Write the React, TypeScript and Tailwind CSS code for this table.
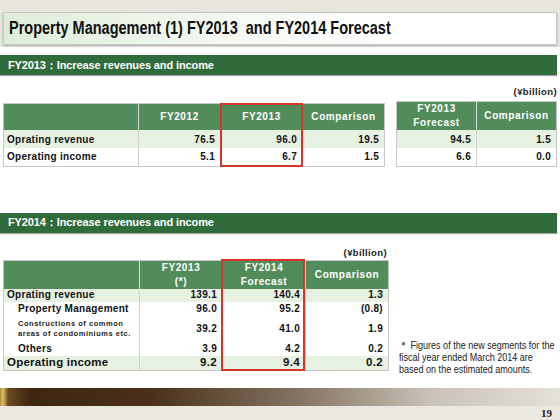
import React from 'react';

const sans = "font-['Liberation_Sans',Arial,sans-serif]";

const SectionBar = ({ label }: { label: string }) => (
  <div className="h-[20px] w-[557px] bg-[#2f6b3b] shadow-[0_1px_1px_rgba(0,0,0,0.35)] flex items-center pl-[8px]">
    <span className="text-white font-bold text-[11px] tracking-[-0.01em]">{label}</span>
  </div>
);

const Unit = () => (
  <div className="text-[9.5px] font-bold tracking-[0.04em] text-[#222] text-right leading-[10px]">(¥billion)</div>
);

const th = 'bg-[#538c5b] text-white font-bold text-[10px] tracking-[0.06em] text-center leading-[14px] border-l border-[#cfdccf] first:border-l-0';
const td = 'text-right pr-[5px] border-l border-[#cfcfcf] font-bold text-[10px] tracking-[0.03em] text-[#111]';
const lbl = 'font-bold text-[10px] tracking-[0.03em] text-[#111] whitespace-nowrap';

const App = () => {
  return (
    <div className={`${sans} w-[560px] h-[420px] bg-white flex flex-col overflow-hidden`}>
      {/* title */}
      <div className="bg-[#e9e6e0] pt-[12px] pb-[2px] px-[3px]">
        <div className="h-[33px] border border-[#c4c4c4] bg-[linear-gradient(90deg,#deedd8,#f4f9f2_40%,#ffffff_70%)] shadow-[0_1px_2px_rgba(0,0,0,0.25)] flex items-center pl-[5px] overflow-hidden">
          <span className="inline-block origin-left scale-x-[0.805] whitespace-nowrap font-bold text-[18px] text-[#111]">
            Property Management (1) FY2013&nbsp; and FY2014 Forecast
          </span>
        </div>
      </div>

      <div className="mt-[8px]">
        <SectionBar label="FY2013：Increase revenues and income" />
      </div>

      {/* FY2013 tables */}
      <div className="mt-[12px] flex items-end pl-[3px] gap-[11px]">
        <div className="relative shrink-0">
          <table className="table-fixed border-collapse border border-[#c8c8c8]">
            <colgroup>
              <col className="w-[135px]" />
              <col className="w-[82px]" />
              <col className="w-[82px]" />
              <col className="w-[82px]" />
            </colgroup>
            <thead>
              <tr className="h-[27px]">
                <th className={th}></th>
                <th className={th}>FY2012</th>
                <th className={th}>FY2013</th>
                <th className={th}>Comparison</th>
              </tr>
            </thead>
            <tbody>
              <tr className="h-[18px] bg-[#e6f1e1]">
                <td className={`${lbl} pl-[3px]`}>Oprating revenue</td>
                <td className={td}>76.5</td>
                <td className={td}>96.0</td>
                <td className={td}>19.5</td>
              </tr>
              <tr className="h-[18px]">
                <td className={`${lbl} pl-[3px]`}>Operating income</td>
                <td className={td}>5.1</td>
                <td className={td}>6.7</td>
                <td className={td}>1.5</td>
              </tr>
            </tbody>
          </table>
          <div className="absolute top-0 bottom-0 left-[217px] w-[83px] border-2 border-[#d8342a]" />
        </div>

        <div className="flex flex-col gap-[4px] shrink-0">
          <Unit />
          <table className="table-fixed border-collapse border border-[#c8c8c8]">
            <colgroup>
              <col className="w-[80px]" />
              <col className="w-[80px]" />
            </colgroup>
            <thead>
              <tr className="h-[27px]">
                <th className={th}>FY2013<br />Forecast</th>
                <th className={th}>Comparison</th>
              </tr>
            </thead>
            <tbody>
              <tr className="h-[18px] bg-[#e6f1e1]">
                <td className={`${td} border-l-0`}>94.5</td>
                <td className={td}>1.5</td>
              </tr>
              <tr className="h-[18px]">
                <td className={`${td} border-l-0`}>6.6</td>
                <td className={td}>0.0</td>
              </tr>
            </tbody>
          </table>
        </div>
      </div>

      <div className="mt-[46px]">
        <SectionBar label="FY2014：Increase revenues and income" />
      </div>

      {/* FY2014 table */}
      <div className="mt-[15px] flex items-end pl-[3px] gap-[10px]">
        <div className="flex flex-col gap-[2px] shrink-0">
          <div className="pr-[2px]"><Unit /></div>
          <div className="relative">
            <table className="table-fixed border-collapse border border-[#c8c8c8]">
              <colgroup>
                <col className="w-[136px]" />
                <col className="w-[83px]" />
                <col className="w-[83px]" />
                <col className="w-[83px]" />
              </colgroup>
              <thead>
                <tr className="h-[26px]">
                  <th className={th}></th>
                  <th className={th}>FY2013<br />(*)</th>
                  <th className={th}>FY2014<br />Forecast</th>
                  <th className={th}>Comparison</th>
                </tr>
              </thead>
              <tbody>
                <tr className="h-[13px] bg-[#e6f1e1]">
                  <td className={`${lbl} pl-[3px] leading-[12px]`}>Oprating revenue</td>
                  <td className={`${td} leading-[12px]`}>139.1</td>
                  <td className={`${td} leading-[12px]`}>140.4</td>
                  <td className={`${td} leading-[12px]`}>1.3</td>
                </tr>
                <tr className="h-[15px]">
                  <td className={`${lbl} pl-[14px] leading-[12px]`}>Property Management</td>
                  <td className={`${td} leading-[12px]`}>96.0</td>
                  <td className={`${td} leading-[12px]`}>95.2</td>
                  <td className={`${td} leading-[12px]`}>(0.8)</td>
                </tr>
                <tr className="h-[25px]">
                  <td className="pl-[14px] font-bold text-[7.5px] leading-[10px] tracking-[0.07em] text-[#222] whitespace-nowrap">
                    Constructions of common<br />areas of condominiums etc.
                  </td>
                  <td className={`${td} leading-[12px]`}>39.2</td>
                  <td className={`${td} leading-[12px]`}>41.0</td>
                  <td className={`${td} leading-[12px]`}>1.9</td>
                </tr>
                <tr className="h-[14px]">
                  <td className={`${lbl} pl-[14px] leading-[12px]`}>Others</td>
                  <td className={`${td} leading-[12px]`}>3.9</td>
                  <td className={`${td} leading-[12px]`}>4.2</td>
                  <td className={`${td} leading-[12px]`}>0.2</td>
                </tr>
                <tr className="h-[15px] bg-[#e6f1e1]">
                  <td className="pl-[3px] font-bold text-[11.5px] leading-[13px] tracking-[0.02em] text-[#111] whitespace-nowrap">Operating income</td>
                  <td className={`${td} text-[11.5px] leading-[13px]`}>9.2</td>
                  <td className={`${td} text-[11.5px] leading-[13px]`}>9.4</td>
                  <td className={`${td} text-[11.5px] leading-[13px]`}>0.2</td>
                </tr>
              </tbody>
            </table>
            <div className="absolute top-[-1px] bottom-0 left-[218px] w-[84px] border-2 border-[#d8342a]" />
          </div>
        </div>

        <div className="w-[158px] shrink-0 -mb-[4px]">
          <div className="w-[205px] origin-left scale-x-[0.82] text-[11px] leading-[12px] text-[#222] whitespace-nowrap">
            ＊ Figures of the new segments for the<br />
            fiscal year ended March 2014 are<br />
            based on the estimated amounts.
          </div>
        </div>
      </div>

      {/* footer */}
      <div className="mt-auto">
        <div className="h-[18px] bg-[linear-gradient(90deg,#b08a3c_0px,#e0bd68_3px,#6b4a22_8px,#3e2610_30px,#4a3018_150px,#857462_300px,#c9c2b7_430px,#e4e0da_560px)]" />
        <div className="h-[14px] bg-[#ebe8e2] flex items-center justify-end pr-[8px]">
          <span className="font-['Liberation_Serif',serif] font-bold text-[11px] leading-[12px] text-[#222]">19</span>
        </div>
      </div>
    </div>
  );
};

export default App;
